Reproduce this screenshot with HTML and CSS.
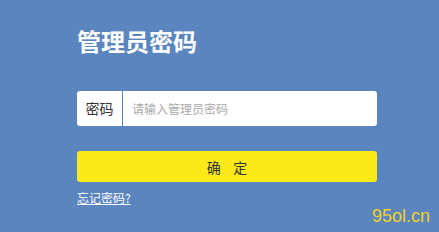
FILE: index.html
```html
<!DOCTYPE html>
<html lang="zh">
<head>
<meta charset="utf-8">
<link rel="stylesheet" href="styles.css">
</head>
<body>
<div class="page">
  <h1 class="title">管理员密码</h1>
  <div class="field">
    <span class="label">密码</span>
    <input class="input" type="password" placeholder="请输入管理员密码">
  </div>
  <button class="btn">确&nbsp;&nbsp;&nbsp;&nbsp;定</button>
  <a class="link" href="#">忘记密码?</a>
</div>
<div class="mark">95ol.cn</div>
</body>
</html>
```
FILE: styles.css
```css
html, body {
  margin: 0;
  padding: 0;
  background: #5b85bf;
  height: 100%;
  overflow: hidden;
}
body {
  font-family: "Noto Sans CJK SC", "Liberation Sans", sans-serif;
  position: relative;
}
.page {
  width: 300px;
  padding: 29px 0 0 77px;
  display: flex;
  flex-direction: column;
  align-items: stretch;
}
.title {
  margin: 0;
  font-size: 24px;
  line-height: 24px;
  font-weight: 700;
  color: #ffffff;
}
.field {
  margin-top: 38px;
  height: 35px;
  background: #ffffff;
  border-radius: 3px;
  display: flex;
  align-items: center;
}
.label {
  width: 46px;
  height: 35px;
  box-sizing: border-box;
  border-right: 1px solid #5b85bf;
  font-size: 14px;
  line-height: 35px;
  color: #333333;
  text-align: center;
  flex: none;
}
.input {
  flex: 1;
  border: 0;
  outline: none;
  height: 33px;
  padding: 0 0 0 9px;
  background: transparent;
  font-family: "Noto Sans CJK SC", "Liberation Sans", sans-serif;
  font-size: 12px;
  color: #333;
}
.input::placeholder {
  color: #a9a9a9;
}
.btn {
  margin-top: 25px;
  height: 31px;
  border: 0;
  border-radius: 3px;
  background: #fbea1a;
  color: #333333;
  font-family: "Noto Sans CJK SC", "Liberation Sans", sans-serif;
  font-size: 14px;
  padding: 0;
}
.link {
  margin-top: 9px;
  align-self: flex-start;
  font-size: 12px;
  line-height: 14px;
  color: #ffffff;
  text-decoration: underline;
}
.mark {
  position: absolute;
  right: 9px;
  bottom: 7px;
  font-family: "Liberation Sans", sans-serif;
  font-size: 18px;
  line-height: 18px;
  color: #f0d22a;
}
```
